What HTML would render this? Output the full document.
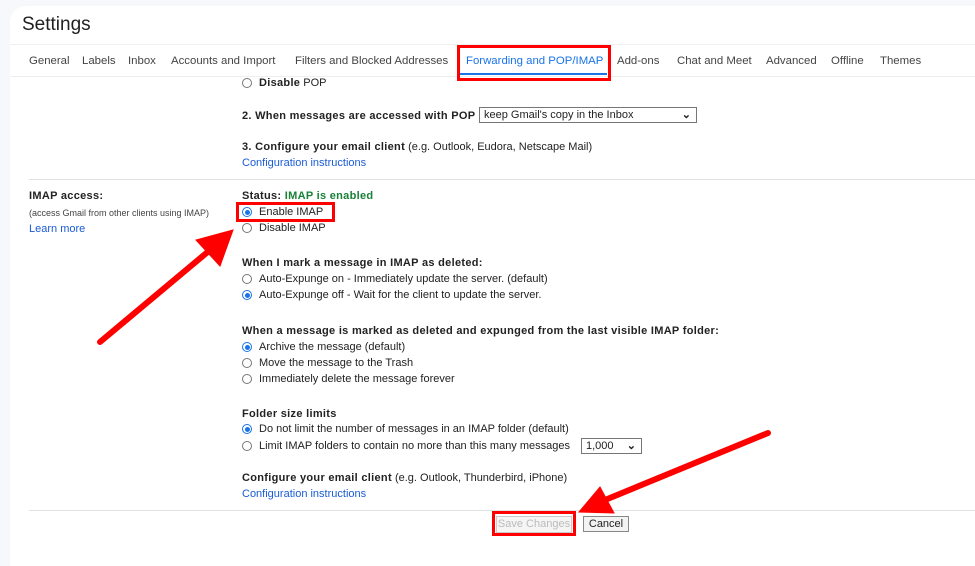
<!DOCTYPE html>
<html><head><meta charset="utf-8"><style>
*{margin:0;padding:0;box-sizing:border-box}
body{width:975px;height:541px;background:#f6f8fc;font-family:"Liberation Sans",Arial,sans-serif;color:#222;position:relative;overflow:hidden;font-size:11px}
.card{position:absolute;left:10px;top:6px;width:980px;height:560px;background:#fff;border-radius:16px 0 0 0}
.a{position:absolute;white-space:nowrap;margin-top:1px}
.b{font-weight:bold;letter-spacing:.3px}
.lnk{color:#1a5bd6}
.tab{position:absolute;top:55px;font-size:11.4px;color:#444}
.r{position:absolute;width:10px;height:10px;border:1px solid #767676;border-radius:50%;background:#fff}
.r.on{border-color:#1a73e8}
.r.on::after{content:"";position:absolute;left:1.5px;top:1.5px;width:5px;height:5px;border-radius:50%;background:#1a73e8}
.line{position:absolute;height:1px;background:#e2e2e2}
.sel{position:absolute;border:1px solid #767676;background:#fff;height:16px;font-size:11px;padding:1px 4px;color:#222}
.red{position:absolute;border:3px solid #f00}
</style></head><body>
<div class="card"></div>
<div class="a" style="left:22px;top:13px;font-size:19px;color:#1f1f1f">Settings</div>
<div class="line" style="left:10px;top:44px;width:965px;background:#f0f0f0"></div>
<div class="tab" style="left:29px">General</div>
<div class="tab" style="left:82px">Labels</div>
<div class="tab" style="left:128px">Inbox</div>
<div class="tab" style="left:171px">Accounts and Import</div>
<div class="tab" style="left:295px">Filters and Blocked Addresses</div>
<div class="tab" style="left:466px;color:#1a73e8">Forwarding and POP/IMAP</div>
<div class="a" style="left:460px;top:72px;width:147px;height:2px;background:#1a73e8"></div>
<div class="tab" style="left:617px">Add-ons</div>
<div class="tab" style="left:677px">Chat and Meet</div>
<div class="tab" style="left:766px">Advanced</div>
<div class="tab" style="left:831px">Offline</div>
<div class="tab" style="left:880px">Themes</div>
<div class="line" style="left:10px;top:76px;width:965px;background:#eee"></div>
<div class="red" style="left:457px;top:45px;width:154px;height:36px"></div>

<div class="r" style="left:242px;top:78px"></div>
<div class="a" style="left:259px;top:76px"><span class="b">Disable</span> POP</div>
<div class="a b" style="left:242px;top:109px">2. When messages are accessed with POP</div>
<div class="sel" style="left:479px;top:107px;width:218px">keep Gmail's copy in the Inbox<span style="position:absolute;right:5px;top:0;font-weight:bold">&#8964;</span></div>
<div class="a" style="left:242px;top:140px"><span class="b">3. Configure your email client</span> (e.g. Outlook, Eudora, Netscape Mail)</div>
<div class="a lnk" style="left:242px;top:156px">Configuration instructions</div>
<div class="line" style="left:29px;top:179px;width:946px"></div>

<div class="a b" style="left:29px;top:189px">IMAP access:</div>
<div class="a" style="left:29px;top:207px;font-size:9px;color:#444">(access Gmail from other clients using IMAP)</div>
<div class="a lnk" style="left:29px;top:222px">Learn more</div>

<div class="a b" style="left:242px;top:189px">Status: <span style="color:#188038">IMAP is enabled</span></div>
<div class="r on" style="left:242px;top:207px"></div>
<div class="a" style="left:259px;top:205px">Enable IMAP</div>
<div class="red" style="left:236px;top:202px;width:99px;height:20px"></div>
<div class="r" style="left:242px;top:223px"></div>
<div class="a" style="left:259px;top:221px">Disable IMAP</div>

<div class="a b" style="left:242px;top:256px">When I mark a message in IMAP as deleted:</div>
<div class="r" style="left:242px;top:274px"></div>
<div class="a" style="left:259px;top:272px">Auto-Expunge on - Immediately update the server. (default)</div>
<div class="r on" style="left:242px;top:290px"></div>
<div class="a" style="left:259px;top:288px">Auto-Expunge off - Wait for the client to update the server.</div>

<div class="a b" style="left:242px;top:324px">When a message is marked as deleted and expunged from the last visible IMAP folder:</div>
<div class="r on" style="left:242px;top:342px"></div>
<div class="a" style="left:259px;top:340px">Archive the message (default)</div>
<div class="r" style="left:242px;top:358px"></div>
<div class="a" style="left:259px;top:356px">Move the message to the Trash</div>
<div class="r" style="left:242px;top:374px"></div>
<div class="a" style="left:259px;top:372px">Immediately delete the message forever</div>

<div class="a b" style="left:242px;top:407px">Folder size limits</div>
<div class="r on" style="left:242px;top:424px"></div>
<div class="a" style="left:259px;top:422px">Do not limit the number of messages in an IMAP folder (default)</div>
<div class="r" style="left:242px;top:441px"></div>
<div class="a" style="left:259px;top:439px">Limit IMAP folders to contain no more than this many messages</div>
<div class="sel" style="left:581px;top:438px;width:61px">1,000<span style="position:absolute;right:5px;top:0;font-weight:bold">&#8964;</span></div>

<div class="a" style="left:242px;top:471px"><span class="b">Configure your email client</span> (e.g. Outlook, Thunderbird, iPhone)</div>
<div class="a lnk" style="left:242px;top:487px">Configuration instructions</div>
<div class="line" style="left:29px;top:510px;width:946px"></div>

<div class="a" style="left:496px;top:515px;width:76px;height:17px;border:1px solid #ccc;background:#f5f5f5;color:#bbb;text-align:center;line-height:15px">Save Changes</div>
<div class="red" style="left:492px;top:511px;width:84px;height:25px"></div>
<div class="a" style="left:583px;top:515px;width:46px;height:16px;border:1px solid #888;background:#f3f3f3;text-align:center;line-height:14px;font-size:11px">Cancel</div>

<svg style="position:absolute;left:0;top:0" width="975" height="541">
<g fill="#f00" stroke="#f00" stroke-linecap="round">
<line x1="100" y1="342" x2="210" y2="250" stroke-width="6"/>
<polygon points="233,230 196,240 220,266" stroke-width="1"/>
<line x1="768" y1="433" x2="605" y2="500" stroke-width="6"/>
<polygon points="579,512 600,487 614,513" stroke-width="1"/>
</g>
</svg>
</body></html>
